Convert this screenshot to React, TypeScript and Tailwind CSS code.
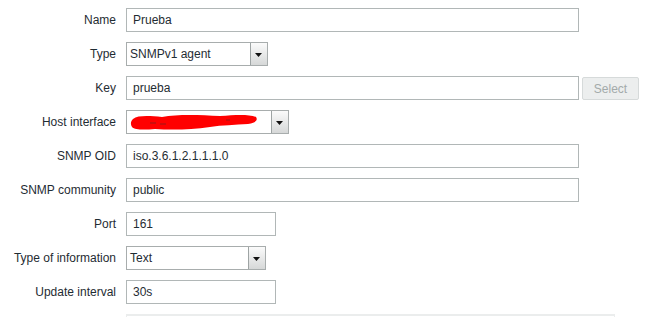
import React from 'react';

const font = { fontFamily: '"Liberation Sans", Arial, sans-serif' };

const Arrow: React.FC = () => (
  <div className="w-[17px] h-full border-l border-[#9ea4a4] bg-gradient-to-b from-[#fbfbfb] to-[#d6d8d8] flex items-center justify-center">
    <svg width="8" height="5" viewBox="0 0 8 5" className="mt-[2px]">
      <path d="M0 0 L7 0 L3.5 4 Z" fill="#111" />
    </svg>
  </div>
);

const TextInput: React.FC<{ value: string; w: string }> = ({ value, w }) => (
  <div className={`${w} h-[24px] border border-[#b1b7b7] bg-white flex items-center pl-[6px] text-[12px] text-[#1f2c33]`}>
    {value}
  </div>
);

const Select: React.FC<{ value: React.ReactNode; w: string }> = ({ value, w }) => (
  <div className={`${w} h-[24px] border border-[#a8adad] bg-white flex items-stretch text-[12px] text-[#1f2c33]`}>
    <div className="flex-1 flex items-center pl-[3px] overflow-hidden">{value}</div>
    <Arrow />
  </div>
);

// redacted value in the host interface select
const Scribble: React.FC = () => (
  <svg width="128" height="22" viewBox="0 0 128 22">
    <path
      d="M3 8 C8 4 20 5 32 6 C48 3 70 4 90 5 C105 4 118 3 126 6 C128 9 126 12 118 13 C105 14 92 14 80 16 C60 19 40 19 25 18 C14 19 5 19 2 16 C0 13 1 10 3 8 Z"
      fill="#ff0000"
    />
    <path d="M12 15 C30 14 50 15 70 14" stroke="#ff0000" strokeWidth="4" fill="none" />
    <path d="M20 12 L26 12 M30 13 L36 13 M96 9 L100 9" stroke="#5a2a2a" strokeWidth="1" opacity="0.6" />
  </svg>
);

type Row = { label: string; field: React.ReactNode };

const rows: Row[] = [
  { label: 'Name', field: <TextInput value="Prueba" w="w-[453px]" /> },
  { label: 'Type', field: <Select value="SNMPv1 agent" w="w-[142px]" /> },
  {
    label: 'Key',
    field: (
      <div className="flex items-center gap-[3px]">
        <TextInput value="prueba" w="w-[453px]" />
        <button className="w-[57px] h-[23px] mt-[1px] border border-[#d6dada] bg-[#eceeee] text-[12px] text-[#a3aaaa] rounded-[2px]">
          Select
        </button>
      </div>
    ),
  },
  { label: 'Host interface', field: <Select value={<Scribble />} w="w-[163px]" /> },
  { label: 'SNMP OID', field: <TextInput value="iso.3.6.1.2.1.1.1.0" w="w-[453px]" /> },
  { label: 'SNMP community', field: <TextInput value="public" w="w-[453px]" /> },
  { label: 'Port', field: <TextInput value="161" w="w-[150px]" /> },
  { label: 'Type of information', field: <Select value="Text" w="w-[140px]" /> },
  { label: 'Update interval', field: <TextInput value="30s" w="w-[150px]" /> },
];

const App: React.FC = () => {
  return (
    <div className="w-[646px] h-[317px] bg-white overflow-hidden pt-[8px]" style={font}>
      {rows.map((r) => (
        <div key={r.label} className="flex items-center h-[24px] mb-[10px]">
          <div className="w-[117px] text-right text-[12px] text-[#1f2c33] pr-[1px]">{r.label}</div>
          <div className="pl-[9px]">{r.field}</div>
        </div>
      ))}
      <div className="ml-[126px] w-[489px] h-[10px] mt-[2px] border-t-2 border-x border-[#ebeded]" />
    </div>
  );
};

export default App;
